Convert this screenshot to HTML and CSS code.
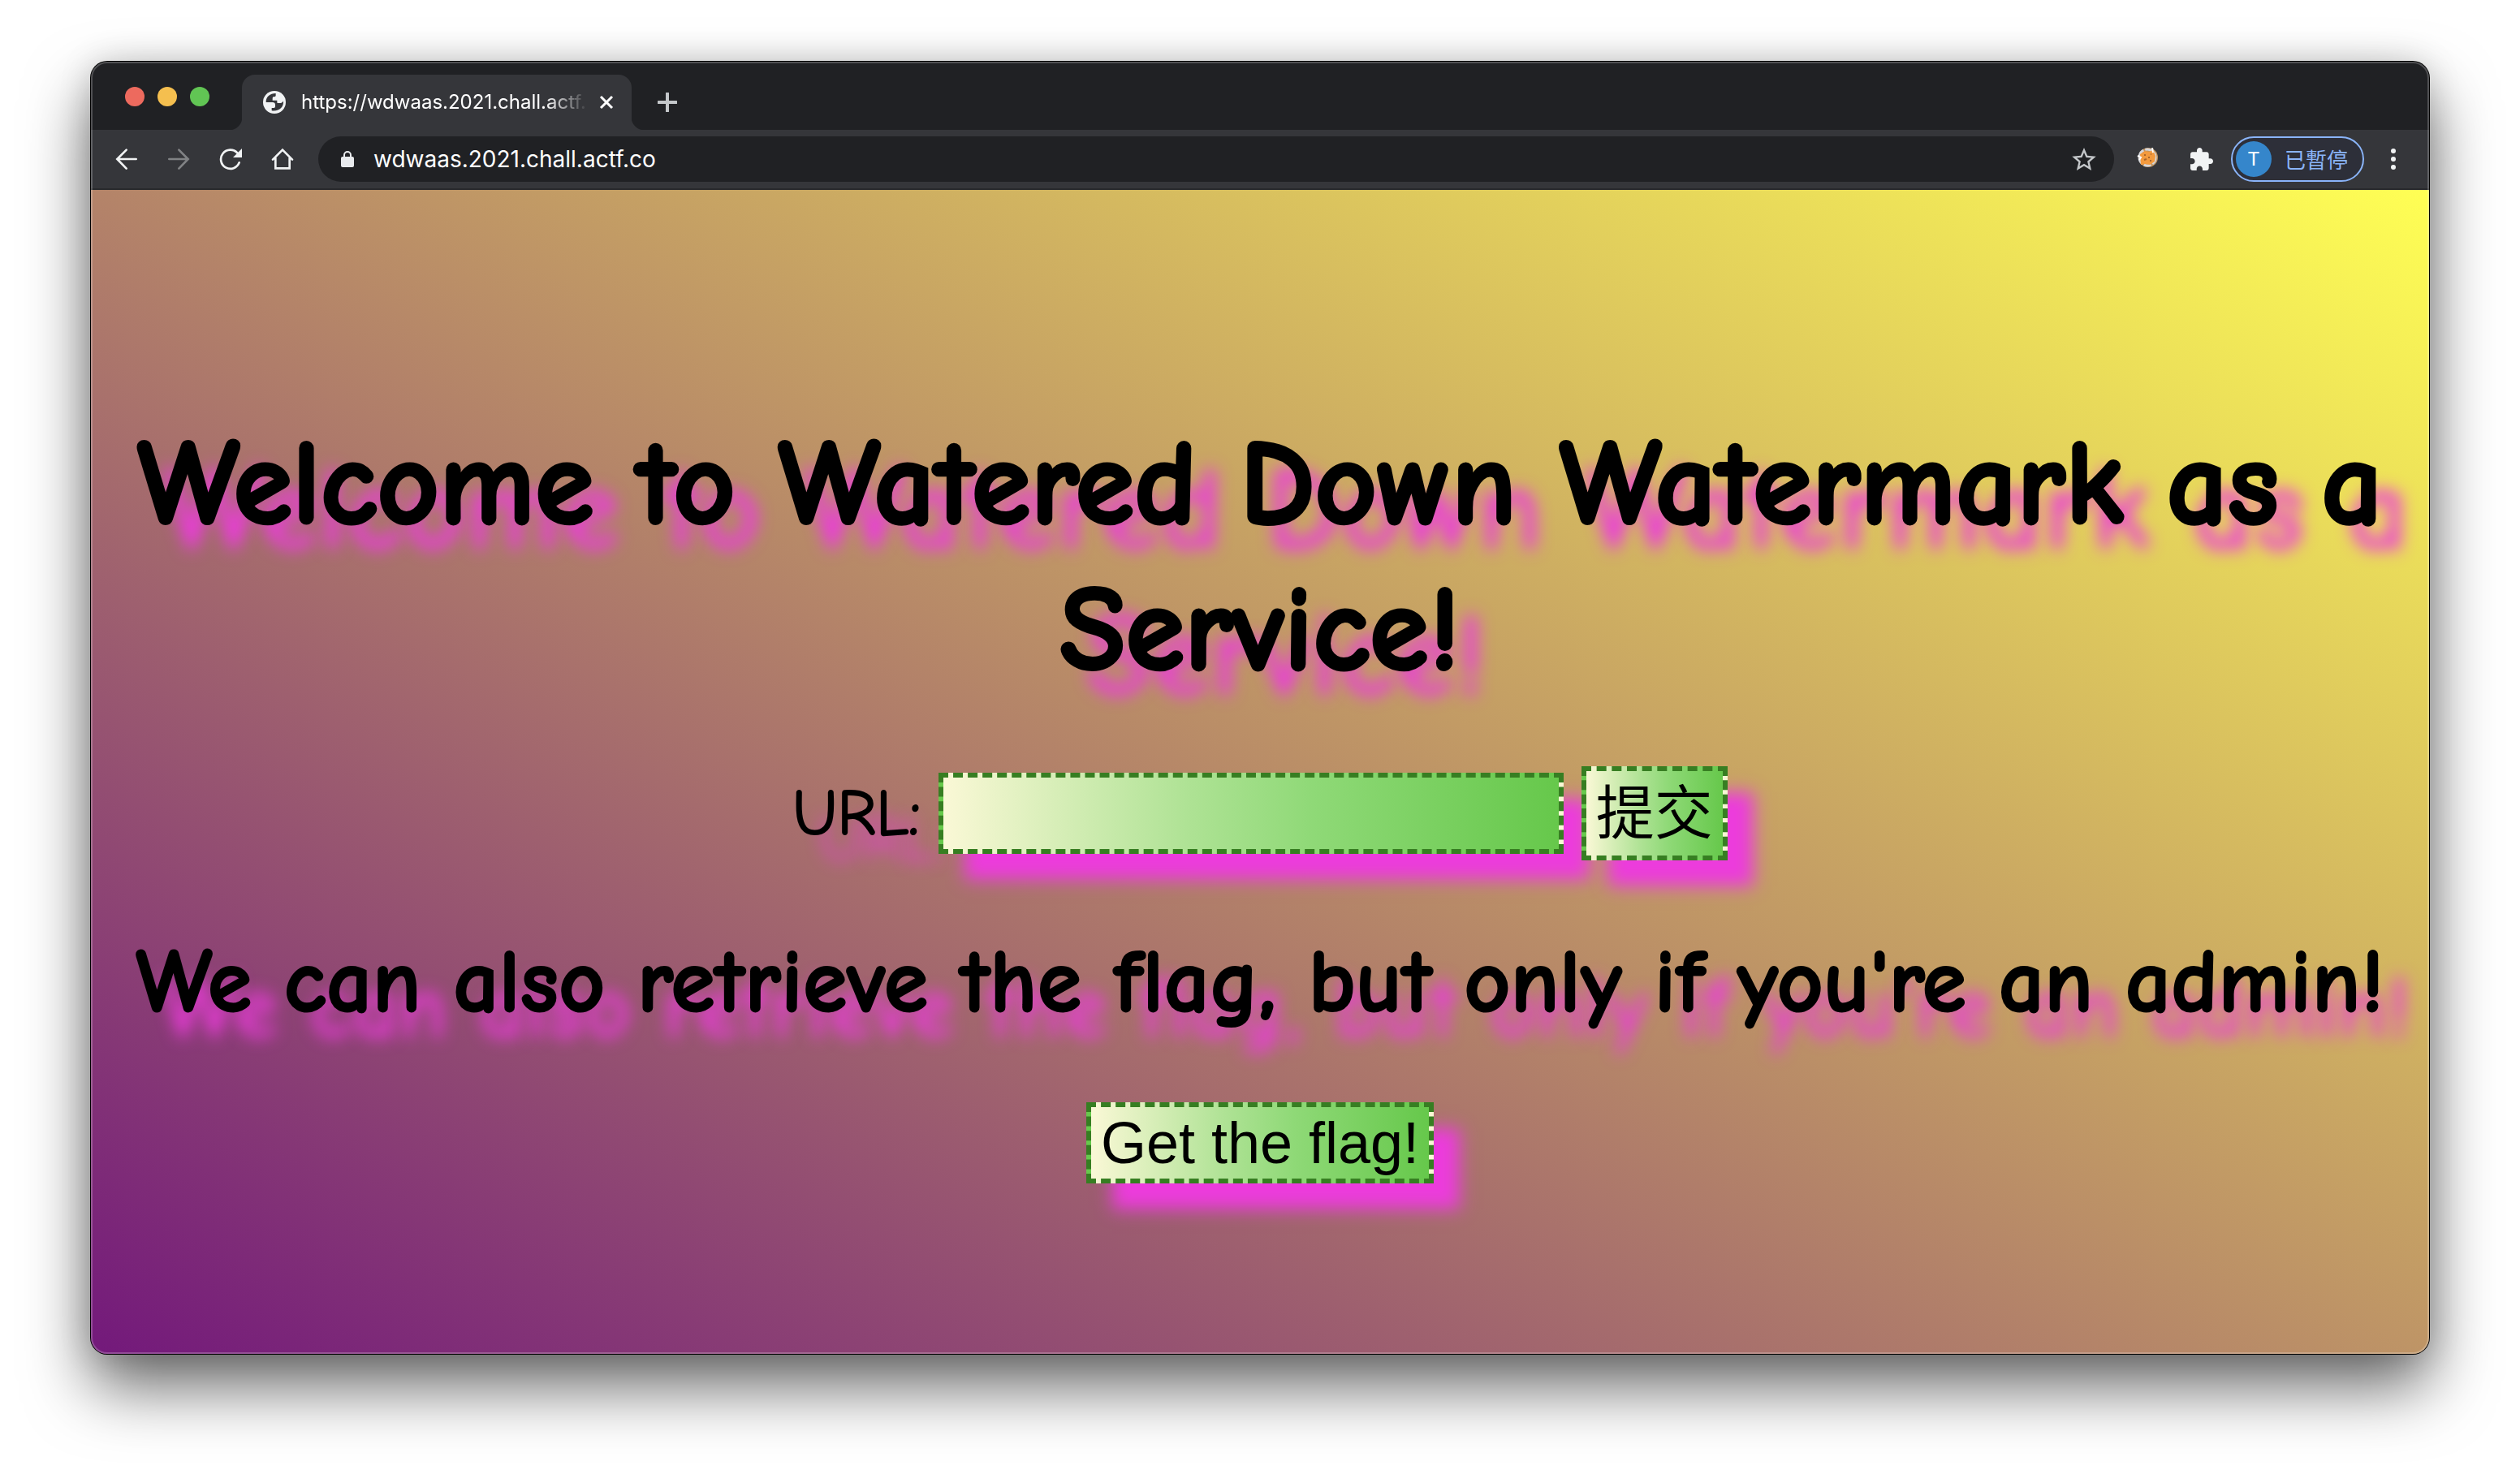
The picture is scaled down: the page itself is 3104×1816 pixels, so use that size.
FILE: index.html
```html
<!DOCTYPE html>
<html lang="en">
<head>
<meta charset="utf-8">
<title>Watered Down Watermark as a Service</title>
<link rel="stylesheet" href="styles.css">
</head>
<body>
<div class="window">
  <header class="tabstrip">
    <div class="lights"><span class="light red"></span><span class="light yellow"></span><span class="light green"></span></div>
    <div class="tab">
      <svg class="icon" viewBox="582 66 84 84"><circle cx="624" cy="108" r="42" fill="#f1f3f4"/><path fill="#35363a" d="M593 108C592 88 608 75 629 75V83Q629 87 624 88H619Q617 90 617 95V101H634V110Q642 112 650 110Q655 108 657 103C660 126 640 143 614 139V129H622Q627 129 627 124V118Q627 108 617 108Z"/></svg>
      <span class="tab-title">https://wdwaas.2021.chall.actf.</span>
      <button class="plain" aria-label="Close tab"><svg class="close" viewBox="0 0 18 18"><path d="M2 2l14 14M16 2L2 16" stroke="#fff" stroke-width="3" fill="none"/></svg></button>
    </div>
    <button class="plain newtab" aria-label="New tab"><svg class="plus" viewBox="0 0 24 24"><path d="M12 1v22M1 12h22" stroke="#c4c7ca" stroke-width="4" stroke-linecap="round"/></svg></button>
  </header>
  <nav class="toolbar">
    <div class="nav-buttons">
      <button class="plain" aria-label="Back"><svg class="icon" viewBox="36 274 84 84"><path d="M113 316H44M77 282L43 316L77 351" class="line"/></svg></button>
      <button class="plain dim" aria-label="Forward"><svg class="icon" viewBox="228 274 84 84"><path d="M235 316H304M271 282L305 316L271 351" class="line"/></svg></button>
      <button class="plain" aria-label="Reload"><svg class="icon" viewBox="420 276 84 84"><path d="M487 295A35 35 0 1 0 494 331" class="line"/><path d="M504 279V312H471Z" fill="#f1f3f4"/></svg></button>
      <button class="plain" aria-label="Home"><svg class="icon" viewBox="612 276 84 84"><path d="M618 320L654 284L690 320M628 314V352H680V314" class="line"/></svg></button>
    </div>
    <div class="omnibox">
      <svg class="lock" viewBox="0 0 16 22"><path d="M4 9V6a4 4 0 0 1 8 0v3" fill="none" stroke="#e8eaed" stroke-width="2"/><rect y="8" width="16" height="13" rx="2" fill="#e8eaed"/></svg>
      <input class="address" aria-label="Address" value="wdwaas.2021.chall.actf.co">
      <button class="plain" aria-label="Bookmark this page"><svg class="star" viewBox="2 2 20 19"><path fill="#c4c7ca" d="M22 9.24l-7.19-.62L12 2 9.19 8.63 2 9.24l5.46 4.73L5.82 21 12 17.27 18.18 21l-1.63-7.03L22 9.24zM12 15.4l-3.76 2.27 1-4.28-3.32-2.88 4.38-.38L12 6.1l1.71 4.04 4.38.38-3.32 2.88 1 4.28L12 15.4z"/></svg></button>
    </div>
    <div class="extensions">
      <button class="plain" aria-label="Cookie editor"><svg class="icon" viewBox="0 0 28 28"><circle cx="14" cy="12" r="12" fill="#c0935f"/><circle cx="13" cy="12" r="10" fill="none" stroke="#d5d6da" stroke-width="3" stroke-dasharray="9 2"/><path d="M4 8l6-4 5 1 5-2 3 7-1 7-6 4-6-1-5 1Z" fill="#f39a3e"/><path d="M9 9h2M14 12h2M9 15l3-1M17 8h1M16 16h2" stroke="#a9652b" stroke-width="2"/><path d="M19 0l1 6M1 10l4 2-2 3" stroke="#fff" stroke-width="2" fill="none"/></svg></button>
      <button class="plain" aria-label="Extensions"><svg class="icon" viewBox="2 1 21 21"><path fill="#f1f3f4" d="M20.500 11H19V7c0-1.100-.9-2-2-2h-4V3.500C13 2.120 11.880 1 10.500 1S8 2.120 8 3.500V5H4c-1.100 0-1.990.9-1.990 2v3.800H3.500c1.490 0 2.700 1.210 2.700 2.700s-1.210 2.700-2.700 2.700H2V20c0 1.100.9 2 2 2h3.800v-1.500c0-1.490 1.210-2.700 2.700-2.700 1.490 0 2.700 1.210 2.700 2.700V22H17c1.100 0 2-.9 2-2v-4h1.500c1.380 0 2.500-1.120 2.500-2.500S21.880 11 20.500 11z"/></svg></button>
    </div>
    <button class="profile"><span class="avatar">T</span><span lang="zh-Hant">已暫停</span></button>
    <button class="plain menu" aria-label="Menu"><svg class="dots" viewBox="0 0 6 26"><g fill="#f1f3f4"><circle cx="3" cy="3" r="3"/><circle cx="3" cy="13" r="3"/><circle cx="3" cy="23" r="3"/></g></svg></button>
  </nav>
  <main class="page">
    <h1>Welcome to Watered Down Watermark as a Service!</h1>
    <form class="url-form">
      <label for="url">URL:</label>
      <input class="fancy url" id="url" name="url" type="text">
      <button class="fancy submit" type="button" lang="zh-Hans">提交</button>
    </form>
    <h2>We can also retrieve the flag, but only if you're an admin!</h2>
    <button class="fancy" type="button">Get the flag!</button>
  </main>
</div>
</body>
</html>
```
FILE: styles.css
```css
* { box-sizing: border-box; }
body {
  margin: 0;
  padding: 76px 112px 148px;
  min-height: 100vh;
  display: flex;
  background: #fff;
  font-family: Inter, "Noto Sans CJK TC", sans-serif;
}
.window {
  flex: 1;
  min-width: 0;
  display: flex;
  flex-direction: column;
  position: relative;
  border-radius: 20px;
  background: #202124;
  box-shadow: 0 0 0 1px #000, 0 40px 80px rgba(0, 0, 0, .6), 0 0 40px rgba(0, 0, 0, .15);
}
/* light rim along the inside edge of the window */
.window::after {
  content: "";
  position: absolute;
  inset: 0;
  border: 2px solid rgba(255, 255, 255, .22);
  border-radius: 20px;
  pointer-events: none;
}
.plain {
  display: flex;
  padding: 0;
  border: 0;
  background: none;
}
.icon { display: block; width: 28px; height: 28px; flex: none; }
.line { fill: none; stroke: #f1f3f4; stroke-width: 8; stroke-linecap: round; }
.dim { opacity: .4; }

.tabstrip { display: flex; height: 84px; padding: 16px 42px 0; }
.lights { display: flex; gap: 16px; width: 144px; padding-top: 15px; }
.light { width: 24px; height: 24px; border-radius: 50%; }
.red { background: #ed6a5e; }
.yellow { background: #f5bf4f; }
.green { background: #61c554; }
.tab {
  position: relative;
  display: flex;
  align-items: center;
  width: 480px;
  padding: 0 22px 0 26px;
  border-radius: 16px 16px 0 0;
  background: #35363a;
}
/* the flared feet of the active tab */
.tab::before, .tab::after {
  content: "";
  position: absolute;
  bottom: 0;
  width: 16px;
  height: 16px;
}
.tab::before { right: 100%; background: radial-gradient(circle at 0 0, #202124 16px, #35363a 17px); }
.tab::after { left: 100%; background: radial-gradient(circle at 100% 0, #202124 16px, #35363a 17px); }
.tab-title {
  flex: 1;
  min-width: 0;
  margin: 0 12px 0 19px;
  white-space: nowrap;
  font-size: 24px;
  line-height: 32px;
  color: #fff;
  -webkit-mask-image: linear-gradient(to right, #000 300px, transparent 354px);
  mask-image: linear-gradient(to right, #000 300px, transparent 354px);
}
.close { width: 18px; height: 18px; }
.newtab { align-items: center; margin-left: 32px; }
.plus { width: 24px; height: 24px; }

.toolbar {
  display: flex;
  align-items: center;
  height: 74px;
  padding: 0 41px 0 30px;
  border-bottom: 2px solid #28292c;
  background: #35363a;
}
.nav-buttons { display: flex; gap: 36px; margin-right: 30px; }
.omnibox {
  flex: 1;
  display: flex;
  align-items: center;
  height: 56px;
  padding: 0 22px 0 28px;
  border-radius: 28px;
  background: #202124;
}
.lock { width: 16px; height: 22px; }
.address {
  flex: 1;
  min-width: 0;
  margin-left: 24px;
  padding: 0;
  border: 0;
  outline: 0;
  background: none;
  color: #fff;
  font: 28px/36px Inter, sans-serif;
}
.star { width: 30px; height: 28px; }
.extensions { display: flex; gap: 38px; margin: 0 22px 0 28px; }
.profile {
  display: flex;
  align-items: center;
  gap: 16px;
  width: 164px;
  height: 56px;
  padding: 0 4px;
  border: 2px solid #8ab4f8;
  border-radius: 28px;
  background: #2d2f39;
  color: #8ab4f8;
  font: 26px/36px "Noto Sans CJK TC", sans-serif;
}
.avatar {
  width: 44px;
  height: 44px;
  border-radius: 50%;
  background: #3586cb;
  color: #fff;
  font: 24px/44px Roboto, sans-serif;
}
.menu { margin-left: 33px; }
.dots { width: 6px; height: 26px; }

.page {
  flex: 1;
  display: flex;
  flex-direction: column;
  align-items: center;
  padding: 272px 16px 40px;
  border-radius: 0 0 20px 20px;
  background: linear-gradient(30deg, #73197b, #ffff54);
  color: #000;
  font-family: "Comic Sans MS", "Comic Neue", fantasy;
  text-align: center;
  text-shadow: 32px 32px 20px #ec3cdc;
}
h1, h2 { margin: 0; font-weight: 700; -webkit-text-stroke: 4px #000; }
h1 { font-size: 148px; line-height: 180px; }
h2 { font-size: 111px; line-height: 136px; margin-bottom: 80px; -webkit-text-stroke-width: 2px; }
.url-form {
  display: flex;
  align-items: center;
  gap: 22px;
  margin: 78px 0 82px;
  font-size: 80px;
  line-height: 100px;
}
label { -webkit-text-stroke: 2px #000; }
.fancy {
  height: 100px;
  padding: 0 12px;
  border: 6px dashed #377e22;
  border-radius: 0;
  background: linear-gradient(to right, #faf8d6, #aee294 40%, #8fd977 60%, #66c84b);
  box-shadow: 32px 32px 20px #ec3cdc;
  color: #000;
  font: 72px/84px "Liberation Sans", "Noto Sans CJK SC", sans-serif;
}
.url { width: 770px; }
.submit { height: 116px; }
```
